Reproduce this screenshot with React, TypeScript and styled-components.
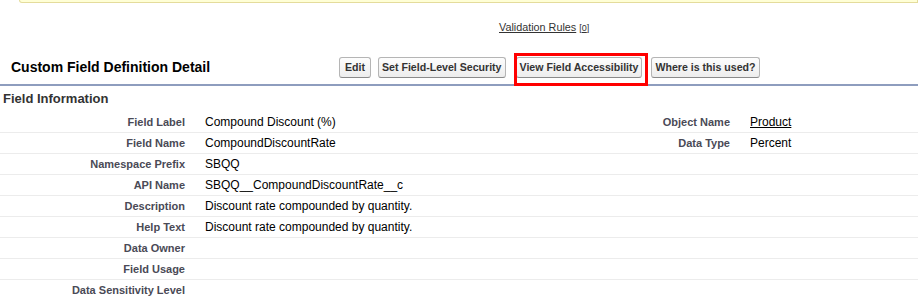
import styled, { createGlobalStyle } from "styled-components";

const GlobalStyle = createGlobalStyle`
  html, body {
    margin: 0;
    padding: 0;
    overflow: hidden;
    background: #fff;
  }
  body {
    font-family: "Liberation Sans", Arial, sans-serif;
    font-size: 12px;
    color: #000;
  }
`;

type Row = {
  label: string;
  value?: string;
  rightLabel?: string;
  rightValue?: string;
  rightLink?: boolean;
};

const ROWS: Row[] = [
  {
    label: "Field Label",
    value: "Compound Discount (%)",
    rightLabel: "Object Name",
    rightValue: "Product",
    rightLink: true,
  },
  {
    label: "Field Name",
    value: "CompoundDiscountRate",
    rightLabel: "Data Type",
    rightValue: "Percent",
  },
  { label: "Namespace Prefix", value: "SBQQ" },
  { label: "API Name", value: "SBQQ__CompoundDiscountRate__c" },
  { label: "Description", value: "Discount rate compounded by quantity." },
  { label: "Help Text", value: "Discount rate compounded by quantity." },
  { label: "Data Owner" },
  { label: "Field Usage" },
  { label: "Data Sensitivity Level" },
];

const Page = styled.div`
  width: 918px;
`;

const MessageBar = styled.div`
  margin-left: 19px;
  height: 2px;
  background: #ffffd6;
  border: 1px solid #e4dc9c;
  border-top: none;
  border-bottom-left-radius: 4px;
`;

const RelatedLinks = styled.div`
  padding: 17px 0 0 499px;
  height: 30px;
  line-height: 14px;
  font-size: 10.8px;
  color: #333;
`;

const Link = styled.a`
  color: #333;
  text-decoration: underline;
  cursor: pointer;
`;

const Count = styled.span`
  font-size: 9px;
  margin-left: 3px;
  color: #333;
`;

const HeaderBar = styled.div`
  display: flex;
  align-items: center;
  height: 34px;
  border-bottom: 2px solid #8e9dbe;
`;

const Title = styled.h2`
  margin: 0;
  width: 328px;
  padding-left: 11px;
  font-size: 14px;
  font-weight: bold;
  color: #000;
`;

const Buttons = styled.div`
  display: flex;
  align-items: center;
  gap: 7px;
`;

const Button = styled.button`
  height: 21px;
  min-width: 32px;
  padding: 0 3px;
  font-family: "Liberation Sans", Arial, sans-serif;
  font-size: 10.6px;
  font-weight: bold;
  color: #333;
  background: linear-gradient(#fdfdfd, #ededed);
  border: 1px solid #b5b5b5;
  border-bottom-color: #8a8a8a;
  border-radius: 3px;
  cursor: pointer;
`;

const Highlight = styled.span`
  position: relative;
  display: inline-flex;
  margin: 0 2px 0 3px;

  &::after {
    content: "";
    position: absolute;
    top: -4px;
    right: -6px;
    bottom: -8px;
    left: -2px;
    border: 3px solid #ff0000;
    pointer-events: none;
  }
`;

const SectionTitle = styled.h3`
  margin: 0;
  height: 26px;
  padding: 5px 0 0 3px;
  box-sizing: border-box;
  font-size: 13px;
  font-weight: bold;
  color: #333;
`;

const DetailGrid = styled.div`
  display: grid;
  grid-template-columns: 195px 350px 195px 1fr;
`;

const Cell = styled.div<{ $label?: boolean }>`
  height: 21px;
  box-sizing: border-box;
  padding: 3px 10px 0;
  line-height: 14px;
  border-bottom: 1px solid #ececec;
  white-space: nowrap;
  text-align: ${(p) => (p.$label ? "right" : "left")};
  font-size: ${(p) => (p.$label ? "11px" : "12px")};
  font-weight: ${(p) => (p.$label ? "bold" : "normal")};
  color: ${(p) => (p.$label ? "#4a4a56" : "#000")};
`;

const ValueLink = styled.a`
  color: #000;
  text-decoration: underline;
`;

export default function App() {
  return (
    <Page>
      <GlobalStyle />
      <MessageBar />
      <RelatedLinks>
        <Link>Validation Rules</Link>
        <Count>
          [<Link>0</Link>]
        </Count>
      </RelatedLinks>
      <HeaderBar>
        <Title>Custom Field Definition Detail</Title>
        <Buttons>
          <Button>Edit</Button>
          <Button>Set Field-Level Security</Button>
          <Highlight>
            <Button>View Field Accessibility</Button>
          </Highlight>
          <Button>Where is this used?</Button>
        </Buttons>
      </HeaderBar>
      <SectionTitle>Field Information</SectionTitle>
      <DetailGrid>
        {ROWS.map((row) => (
          <>
            <Cell $label key={row.label + "-l"}>{row.label}</Cell>
            <Cell key={row.label + "-v"}>{row.value}</Cell>
            <Cell $label key={row.label + "-rl"}>{row.rightLabel}</Cell>
            <Cell key={row.label + "-rv"}>
              {row.rightLink ? (
                <ValueLink>{row.rightValue}</ValueLink>
              ) : (
                row.rightValue
              )}
            </Cell>
          </>
        ))}
      </DetailGrid>
    </Page>
  );
}
